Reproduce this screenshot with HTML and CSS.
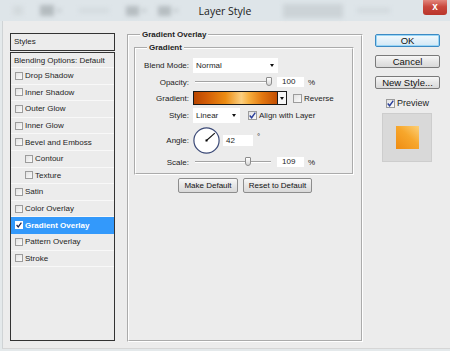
FILE: index.html
```html
<!DOCTYPE html>
<html lang="en">
  <head>
    <meta charset="UTF-8" />
    <title>Layer Style</title>
    <link rel="stylesheet" href="styles.css">
  </head>
  <body>
    <div class="window">
      <!-- title bar, with the blurred app toolbar showing through -->
      <header class="titlebar">
        <div class="ghost-toolbar">
          <span class="ghost g1"></span>
          <span class="ghost g2"></span>
          <span class="ghost g2s"></span>
          <span class="ghost g3"></span>
          <span class="ghost g4"></span>
          <span class="ghost g4s"></span>
          <span class="ghost g5"></span>
          <span class="ghost g5s"></span>
          <span class="ghost g6"></span>
          <span class="ghost g7"></span>
        </div>
        <div class="title">Layer Style</div>
        <div class="close">x</div>
      </header>

      <main class="dialog">
        <aside class="styles-panel">
          <div class="styles-head">Styles</div>
          <ul class="styles-list">
            <li class="blend-row">Blending Options: Default</li>
            <li><span class="cb"></span>Drop Shadow</li>
            <li><span class="cb"></span>Inner Shadow</li>
            <li><span class="cb"></span>Outer Glow</li>
            <li><span class="cb"></span>Inner Glow</li>
            <li><span class="cb"></span>Bevel and Emboss</li>
            <li class="sub"><span class="cb"></span>Contour</li>
            <li class="sub"><span class="cb"></span>Texture</li>
            <li><span class="cb"></span>Satin</li>
            <li><span class="cb"></span>Color Overlay</li>
            <li class="selected">
              <span class="cb checked">
                <svg viewBox="0 0 8 8" width="6" height="6"><polyline points="0.8,4 3,6.6 7.2,0.8" /></svg>
              </span>Gradient Overlay
            </li>
            <li><span class="cb"></span>Pattern Overlay</li>
            <li><span class="cb"></span>Stroke</li>
          </ul>
        </aside>

        <fieldset class="group outer">
          <legend>Gradient Overlay</legend>
          <fieldset class="group inner">
            <legend>Gradient</legend>

            <div class="row row-blend">
              <label>Blend Mode:</label>
              <div class="select select-blend"><span>Normal</span><i class="caret"></i></div>
            </div>

            <div class="row row-opacity">
              <label>Opacity:</label>
              <div class="slider"><span class="thumb" style="left: 76px"></span></div>
              <div class="field">100</div>
              <span class="unit">%</span>
            </div>

            <div class="row row-gradient">
              <label>Gradient:</label>
              <div class="grad-bar"></div>
              <div class="grad-btn"><i class="caret"></i></div>
              <span class="cb cb-lg reverse-cb"></span>
              <span class="cb-text">Reverse</span>
            </div>

            <div class="row row-style">
              <label>Style:</label>
              <div class="select select-style"><span>Linear</span><i class="caret"></i></div>
              <span class="cb cb-lg align-cb">
                <svg viewBox="0 0 8 8" width="7" height="7"><polyline points="0.8,4 3,6.6 7.2,0.8" /></svg>
              </span>
              <span class="cb-text">Align with Layer</span>
            </div>

            <div class="row row-angle">
              <label>Angle:</label>
              <svg class="dial" viewBox="0 0 27 27" width="27" height="27">
                <circle cx="13.5" cy="13.5" r="12.6" />
                <line x1="13.5" y1="13.5" x2="21.8" y2="6.1" />
                <rect x="12.5" y="12.5" width="2" height="2" />
              </svg>
              <div class="field field-angle">42</div>
              <span class="degree">°</span>
            </div>

            <div class="row row-scale">
              <label>Scale:</label>
              <div class="slider"><span class="thumb" style="left: 55px"></span></div>
              <div class="field">109</div>
              <span class="unit">%</span>
            </div>
          </fieldset>

          <div class="defaults">
            <button class="btn btn-make">Make Default</button>
            <button class="btn btn-reset">Reset to Default</button>
          </div>
        </fieldset>

        <div class="actions">
          <button class="btn side-btn ok-btn">OK</button>
          <button class="btn side-btn">Cancel</button>
          <button class="btn side-btn">New Style...</button>
          <div class="preview-row">
            <span class="cb cb-lg">
              <svg viewBox="0 0 8 8" width="7" height="7"><polyline points="0.8,4 3,6.6 7.2,0.8" /></svg>
            </span>
            <span class="cb-text">Preview</span>
          </div>
          <div class="swatch"><div class="swatch-fill"></div></div>
        </div>
      </main>
    </div>
  </body>
</html>
```

FILE: styles.css
```css
/* Layer Style dialog */
body {
  margin: 0;
  font-family: "Liberation Sans", Arial, sans-serif;
  font-size: 8px;
  color: #1e1e1e;
  background: #e6eaec;
}

.window {
  width: 450px;
  height: 351px;
  display: flex;
  flex-direction: column;
  background: #e4e9eb;
  overflow: hidden;
}

/* title bar */
.titlebar {
  height: 21px;
  flex-shrink: 0;
  display: grid;
  background: #dee5e9;
}

.titlebar > * {
  grid-area: 1 / 1;
}

.ghost-toolbar {
  display: flex;
  align-items: center;
  filter: blur(2px);
}

.ghost {
  height: 9px;
  background: #bfc6ca;
}

.g1 { width: 10px; margin-left: 13px; background: #d3dadd; }
.g2 { width: 14px; height: 11px; margin-left: 17px; background: #b4bbbf; }
.g2s { width: 4px; height: 3px; margin-left: 3px; }
.g3 { width: 30px; height: 5px; margin-left: 18px; background: #d4dbdf; }
.g4 { width: 13px; height: 10px; margin-left: 17px; background: #b6bdc1; }
.g4s { width: 4px; height: 3px; margin-left: 3px; }
.g5 { width: 13px; height: 10px; margin-left: 12px; background: #b6bdc1; }
.g5s { width: 4px; height: 3px; margin-left: 3px; }
.g6 { width: 60px; height: 14px; margin-left: 105px; background: #ccd3d7; }
.g7 { width: 33px; height: 5px; margin-left: 14px; background: #d2d9dd; }

.title {
  justify-self: center;
  align-self: center;
  font-family: "Open Sans", sans-serif;
  font-size: 10.5px;
  color: #1b1b1b;
}

.close {
  justify-self: end;
  align-self: start;
  width: 24px;
  height: 15px;
  margin-right: 3px;
  border-radius: 0 0 3px 3px;
  background: linear-gradient(#e2867c, #c9473c 45%, #b9352b);
  color: #fff;
  font-weight: bold;
  font-size: 10px;
  line-height: 13px;
  text-align: center;
}

/* dialog body */
.dialog {
  flex: 1;
  display: flex;
  align-items: flex-start;
  margin: 0 0 2px 2px;
  border-left: 1px solid #cfd3d5;
  border-bottom: 1px solid #d6d6d6;
  background: #ececec;
}

.styles-panel {
  width: 105px;
  margin: 12px 0 0 7px;
}

.styles-head {
  height: 18px;
  box-sizing: border-box;
  border: 1px solid #333;
  padding-left: 3px;
  line-height: 16px;
  margin-bottom: 1px;
}

.styles-list {
  list-style: none;
  margin: 0;
  padding: 0;
  height: 289px;
  box-sizing: border-box;
  border: 1px solid #333;
}

.styles-list li {
  height: 16.6px;
  box-sizing: border-box;
  display: flex;
  align-items: center;
  padding-left: 4px;
  border-bottom: 1px solid #f8f8f8;
}

.styles-list li.blend-row {
  height: 15px;
  padding-left: 3px;
}

.styles-list li.sub {
  padding-left: 14px;
}

.styles-list li.selected {
  background: #3399fb;
  color: #fff;
  font-weight: bold;
  border-bottom-color: #3399fb;
}

.cb {
  width: 8px;
  height: 8px;
  box-sizing: border-box;
  flex-shrink: 0;
  border: 1px solid #9c9c9c;
  background: linear-gradient(135deg, #e2e2e2, #fbfbfb);
  margin-right: 2px;
  display: flex;
  align-items: center;
  justify-content: center;
}

.cb svg polyline {
  fill: none;
  stroke: #2b3f9a;
  stroke-width: 1.6;
}

.cb.checked {
  background: #fff;
  border-color: #fff;
}

.cb.checked svg polyline {
  stroke: #1b2450;
}

.cb-lg {
  width: 9px;
  height: 9px;
}

/* option groups */
.group {
  margin: 0;
  padding: 0;
  border: 2px groove #fff;
  box-sizing: border-box;
  min-width: 0;
}

.group legend {
  font-weight: bold;
  line-height: 10px;
  padding: 0 2px;
  margin-left: 11px;
}

.outer {
  width: 236px;
  height: 312px;
  margin: 9px 0 0 12px;
}

.inner {
  margin: 3px 7px 0 5px;
  padding: 0 0 6px 0;
}

.row {
  display: flex;
  align-items: center;
}

.row label {
  width: 53px;
  margin-right: 4px;
  text-align: right;
  color: #222;
}

.row-blend { height: 15px; margin-top: 5px; }
.row-opacity { height: 10px; margin-top: 4px; }
.row-gradient { height: 14px; margin-top: 4px; }
.row-style { height: 15px; margin-top: 3px; }
.row-angle { height: 27px; margin-top: 4px; }
.row-scale { height: 10px; margin-top: 3px; }

.select {
  height: 15px;
  box-sizing: border-box;
  background: #fff;
  display: flex;
  align-items: center;
  justify-content: space-between;
  padding: 0 4px 0 3px;
}

.select-blend { width: 85px; }
.select-style { width: 47px; }

.caret {
  width: 0;
  height: 0;
  border-left: 2.5px solid transparent;
  border-right: 2.5px solid transparent;
  border-top: 3px solid #111;
}

.slider {
  position: relative;
  width: 80px;
  height: 10px;
  margin-right: 4px;
}

.slider::before {
  content: "";
  position: absolute;
  left: 2px;
  right: 2px;
  top: 4px;
  height: 1px;
  background: #a3a3a3;
  border-bottom: 1px solid #fff;
}

.thumb {
  position: absolute;
  top: 0;
  width: 6px;
  height: 9px;
  margin-left: -3px;
  box-sizing: border-box;
  border: 1px solid #8c8c8c;
  border-radius: 1px 1px 3px 3px;
  background: linear-gradient(#fff, #d6d6d6);
}

.field {
  width: 27px;
  height: 10px;
  box-sizing: border-box;
  padding-left: 5px;
  line-height: 10px;
  background: #fff;
}

.field-angle {
  width: 30px;
  height: 11px;
  line-height: 11px;
  padding-left: 3px;
  margin-left: 3px;
}

.unit {
  margin-left: 4px;
}

.degree {
  align-self: flex-start;
  margin: 5px 0 0 4px;
}

.grad-bar {
  width: 85px;
  height: 14px;
  box-sizing: border-box;
  border: 1px solid #1a1a1a;
  background: linear-gradient(90deg, #b94600, #d25c06 15%, #ec8c12 38%, #fbcf80 57%, #f7b040 66%, #e37810 82%, #c24e02);
}

.grad-btn {
  width: 9px;
  height: 14px;
  box-sizing: border-box;
  border: 1px solid #1a1a1a;
  border-left: 0;
  background: #f6f6f6;
  display: flex;
  align-items: center;
  justify-content: center;
}

.reverse-cb { margin-left: 6px; }
.align-cb { margin-left: 8px; }

.dial circle {
  fill: #fff;
  stroke: #3d4b78;
  stroke-width: 1.2;
}

.dial line {
  stroke: #111;
  stroke-width: 1.1;
}

.dial rect {
  fill: #000;
}

.defaults {
  display: flex;
  justify-content: center;
  gap: 5px;
  margin-top: 3px;
}

/* buttons */
.btn {
  height: 15px;
  padding: 0;
  box-sizing: border-box;
  border: 1px solid #8d8d8d;
  border-radius: 2px;
  background: linear-gradient(#f7f7f7, #e6e6e6 50%, #d9d9d9);
  font-family: "Liberation Sans", Arial, sans-serif;
  font-size: 8px;
  color: #111;
}

.btn-make { width: 60px; }
.btn-reset { width: 69px; }

.actions {
  width: 65px;
  margin: 13px 0 0 12px;
  display: flex;
  flex-direction: column;
}

.side-btn {
  height: 13px;
  font-size: 9.5px;
  line-height: 11px;
  margin-top: 8px;
  border-color: #7a7a7a;
}

.ok-btn {
  margin-top: 0;
  border-color: #3c8ac4;
  box-shadow: inset 0 0 0 1px #9ad6f6;
  background: linear-gradient(#f4fafd, #e2f0f9 50%, #d2e8f6);
}

.preview-row {
  display: flex;
  align-items: center;
  justify-content: center;
  margin-top: 9px;
  font-size: 9px;
}

.preview-row .cb {
  margin-right: 2px;
}

.swatch {
  width: 50px;
  height: 49px;
  box-sizing: border-box;
  margin: 5px 0 0 7px;
  border: 1px solid #cdcdcd;
  background: #d9d9d9;
}

.swatch-fill {
  width: 23px;
  height: 23px;
  margin: 12px 0 0 13px;
  background: linear-gradient(222deg, #fcd078, #f7a72c 45%, #ef8c12);
}
```
